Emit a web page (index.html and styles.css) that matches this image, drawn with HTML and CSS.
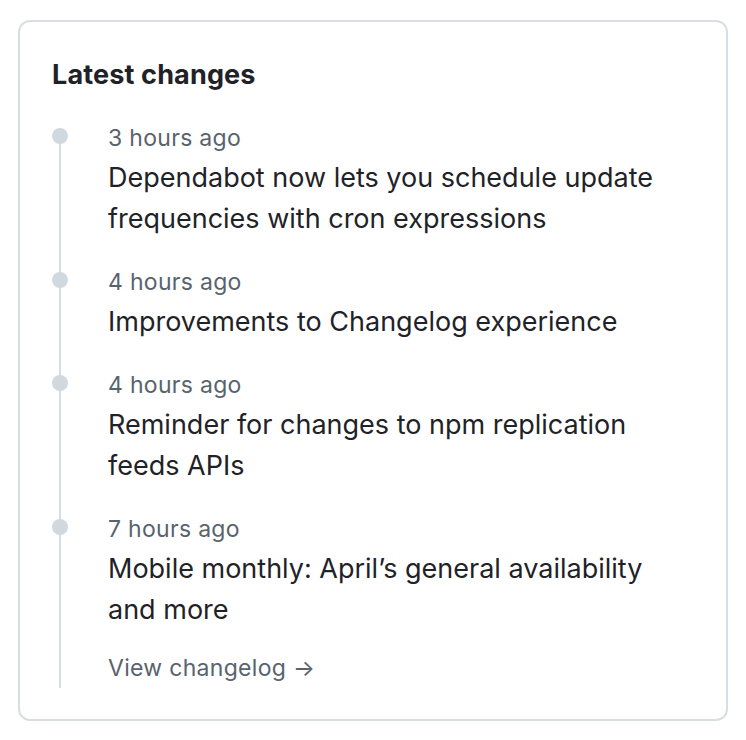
FILE: index.html
```html
<!DOCTYPE html>
<html>
<head>
<meta charset="utf-8">
<link rel="stylesheet" href="styles.css">
</head>
<body>
<div class="card">
  <h2 class="title">Latest changes</h2>
  <div class="timeline">
    <div class="item">
      <div class="meta">3 hours ago</div>
      <div class="text">Dependabot now lets you schedule update frequencies with cron expressions</div>
    </div>
    <div class="item">
      <div class="meta">4 hours ago</div>
      <div class="text">Improvements to Changelog experience</div>
    </div>
    <div class="item">
      <div class="meta">4 hours ago</div>
      <div class="text">Reminder for changes to npm replication feeds APIs</div>
    </div>
    <div class="item">
      <div class="meta">7 hours ago</div>
      <div class="text">Mobile monthly: April’s general availability and more</div>
    </div>
    <a class="more" href="#">View changelog →</a>
  </div>
</div>
</body>
</html>
```
FILE: styles.css
```css
html, body { margin: 0; padding: 0; background: #fff; }
body { font-family: Inter, "Noto Sans", sans-serif; color: #1f2328; }
.card {
  margin: 20px 18px 0 18px;
  width: 710px;
  height: 701px;
  box-sizing: border-box;
  border: 2px solid #d8dee4;
  border-radius: 12px;
  padding: 0 44px 0 32px;
}
.title {
  margin: 0;
  padding-top: 36px;
  font-size: 27px;
  line-height: 34px;
  font-weight: 700;
  letter-spacing: 0.15px;
}
.timeline {
  position: relative;
  margin-top: 30px;
  padding-left: 56px;
  padding-bottom: 9px;
}
.timeline::before {
  content: "";
  position: absolute;
  left: 7px;
  top: 12px;
  bottom: 0;
  width: 2px;
  background: #d8dee4;
}
.item { position: relative; padding-bottom: 27px; }
.item::before {
  content: "";
  position: absolute;
  left: -56px;
  top: 6px;
  width: 16px;
  height: 16px;
  border-radius: 50%;
  background: #d1d9e0;
}
.meta {
  font-size: 23px;
  line-height: 32px;
  margin-bottom: 3px;
  color: #59636e;
  letter-spacing: 0.3px;
}
.text {
  font-size: 27px;
  line-height: 41px;
  color: #1f2328;
}
.more {
  display: block;
  font-size: 23px;
  line-height: 22px;
  letter-spacing: 0.3px;
  color: #59636e;
  text-decoration: none;
}
```
